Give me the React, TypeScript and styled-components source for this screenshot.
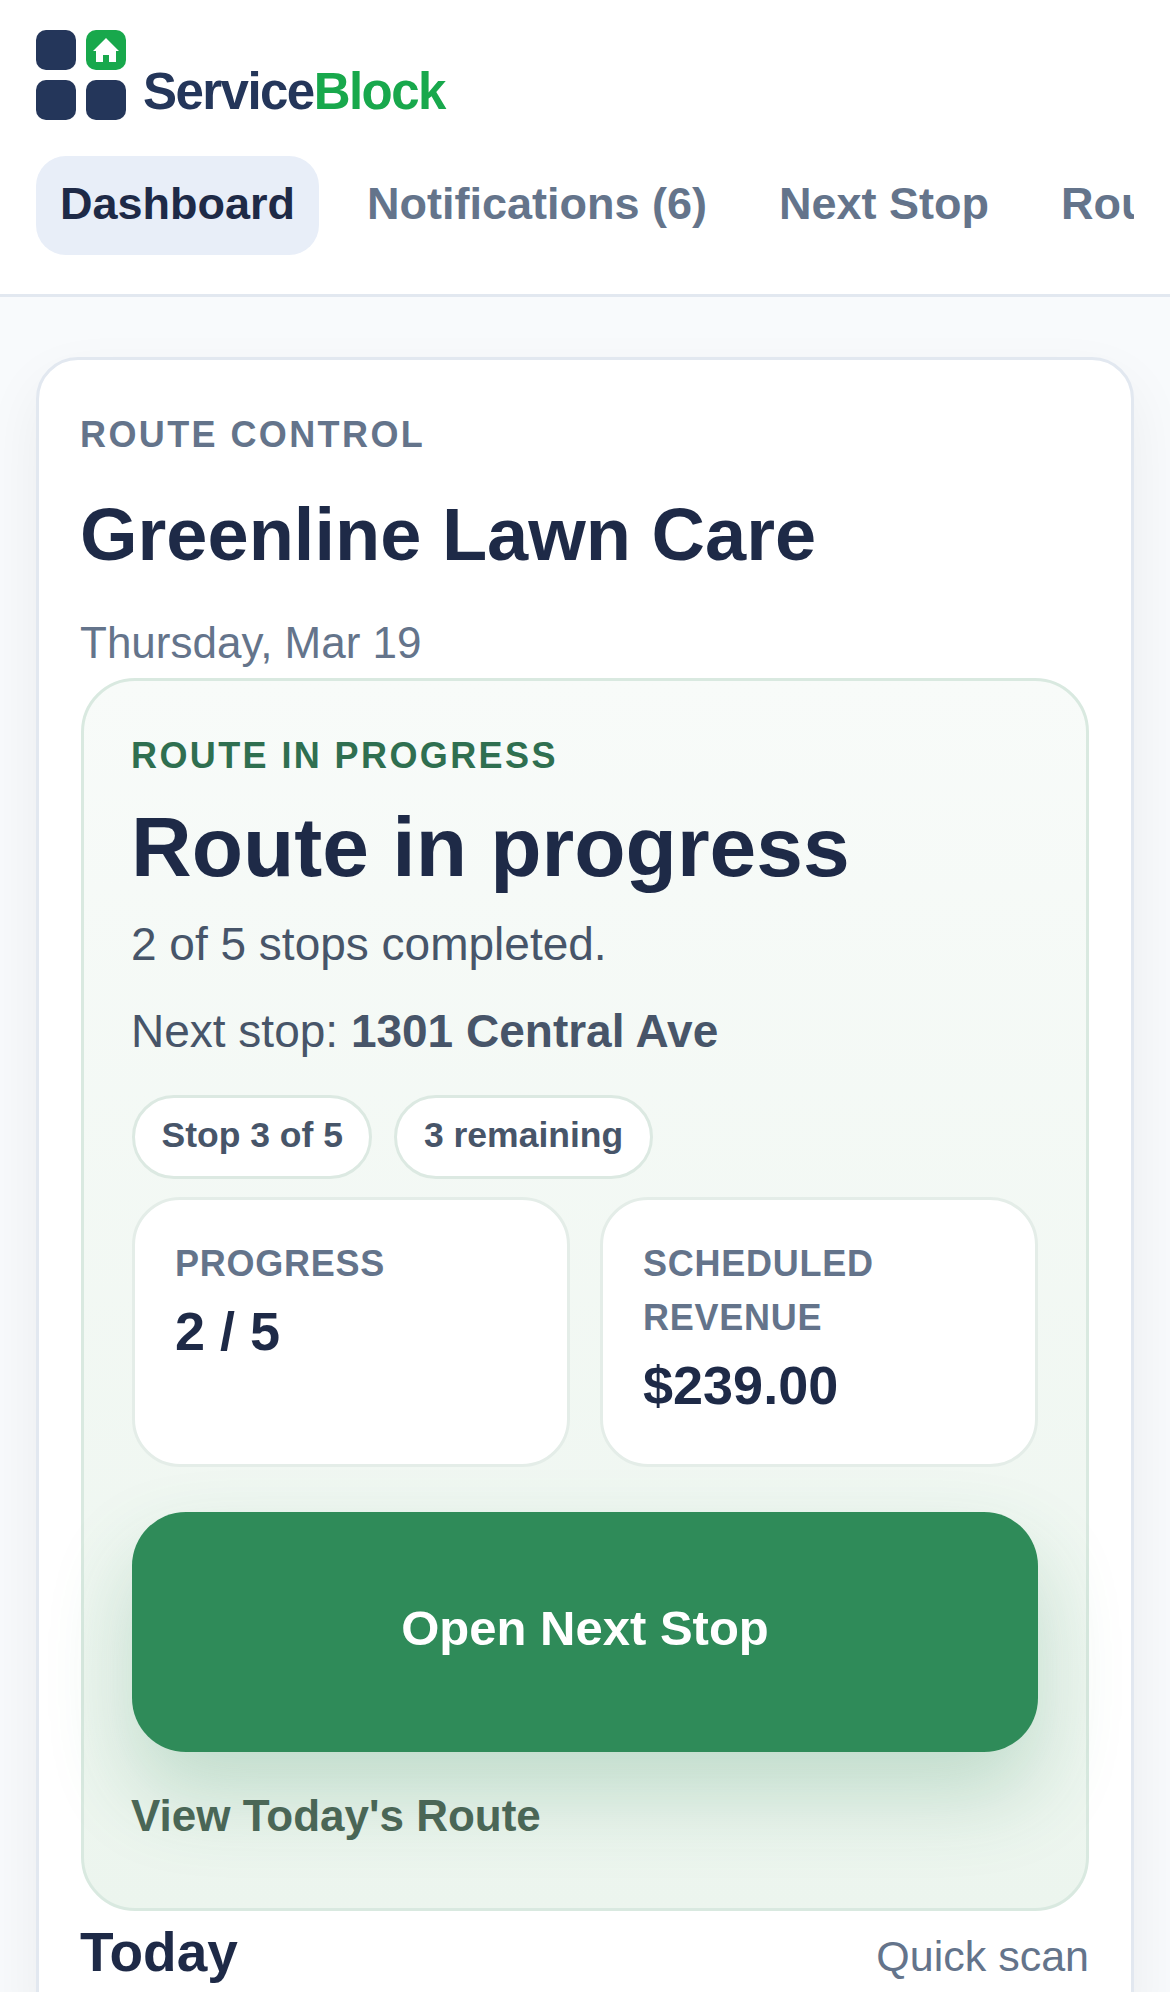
import React from "react";
import styled, { createGlobalStyle, css } from "styled-components";

const GlobalStyle = createGlobalStyle`
  html, body {
    margin: 0;
    padding: 0;
  }
  body {
    font-family: "Liberation Sans", Arial, sans-serif;
    background: #f8fafc;
    color: #1e2a47;
  }
  * {
    box-sizing: border-box;
  }
`;

// the reference text sits a hair left of its box edge
const textNudge = css`
  margin-left: -1px;
`;

const Page = styled.div`
  width: 1170px;
  height: 1992px;
  overflow: hidden;
  background: #f8fafc;
`;

const Header = styled.header`
  background: #ffffff;
  border-bottom: 3px solid #e2e8f0;
  padding: 30px 36px 39px;
`;

const Brand = styled.div`
  display: flex;
  align-items: flex-end;
  gap: 17px;
  height: 90px;
`;

const BrandName = styled.div`
  font-size: 51px;
  line-height: 55px;
  font-weight: 700;
  letter-spacing: -1.55px;
  color: #24365a;
  padding-bottom: 1px;
`;

const BrandAccent = styled.span`
  color: #18a84c;
`;

const Nav = styled.nav`
  display: flex;
  gap: 24px;
  margin-top: 36px;
  overflow: hidden;
`;

const NavItem = styled.a<{ $active?: boolean }>`
  flex: none;
  height: 99px;
  padding: 0 24px 4px;
  display: flex;
  align-items: center;
  border-radius: 30px;
  font-size: 45px;
  font-weight: 700;
  color: ${(p) => (p.$active ? "#1e2a47" : "#64748b")};
  background: ${(p) => (p.$active ? "#e8eef8" : "transparent")};
`;

const Main = styled.main`
  padding: 60px 36px 0;
`;

const Card = styled.section`
  background: #ffffff;
  border: 3px solid #e2e8f0;
  border-radius: 42px;
  padding: 48px 42px 60px;
  box-shadow: 0 24px 60px rgba(15, 23, 42, 0.06);
`;

const Kicker = styled.div`
  ${textNudge}
  font-size: 36px;
  line-height: 54px;
  font-weight: 700;
  letter-spacing: 2.4px;
  color: #64748b;
`;

const Title = styled.h1`
  ${textNudge}
  margin-top: 28px;
  margin-bottom: 0;
  font-size: 74px;
  line-height: 90px;
  font-weight: 700;
  color: #1e2a47;
`;

const DateLine = styled.p`
  ${textNudge}
  margin-top: 30px;
  margin-bottom: 0;
  font-size: 44px;
  line-height: 66px;
  color: #64748b;
`;

const Hero = styled.div`
  margin-top: 2px;
  border: 3px solid #d9e9e0;
  border-radius: 54px;
  padding: 48px 48px 59px;
  background: linear-gradient(180deg, #f8fbf9 0%, #ecf5ee 100%);
`;

const HeroKicker = styled(Kicker)`
  color: #2f6f50;
`;

const HeroTitle = styled.h2`
  ${textNudge}
  margin-top: 16px;
  margin-bottom: 0;
  font-size: 84px;
  line-height: 96px;
  font-weight: 700;
  color: #1e2a47;
`;

const HeroLine = styled.p`
  ${textNudge}
  margin-top: 18px;
  margin-bottom: 0;
  font-size: 46px;
  line-height: 69px;
  color: #475569;
`;

const StopsLine = styled(HeroLine)`
  margin-top: 15px;
`;

const Chips = styled.div`
  display: flex;
  gap: 22px;
  margin-top: 29px;
`;

const Chip = styled.div`
  height: 84px;
  padding: 0 26.5px 4px;
  display: flex;
  align-items: center;
  background: #ffffff;
  border: 3px solid #dce9e2;
  border-radius: 42px;
  font-size: 35.5px;
  font-weight: 700;
  color: #475569;
`;

const Stats = styled.div`
  display: grid;
  grid-template-columns: 1fr 1fr;
  gap: 30px;
  margin-top: 18px;
`;

const Stat = styled.div`
  height: 270px;
  padding: 37px 40px;
  background: #ffffff;
  border: 3px solid #e4ede8;
  border-radius: 48px;
`;

const StatLabel = styled.div`
  font-size: 36px;
  line-height: 54px;
  font-weight: 700;
  letter-spacing: 0.75px;
  color: #64748b;
`;

const StatValue = styled.div`
  margin-top: 7px;
  font-size: 54px;
  line-height: 66px;
  font-weight: 700;
  color: #1e2a47;
`;

const PrimaryButton = styled.div`
  margin-top: 45px;
  height: 240px;
  padding-bottom: 9px;
  display: flex;
  align-items: center;
  justify-content: center;
  background: #2f8b59;
  border-radius: 54px;
  font-size: 49px;
  font-weight: 700;
  color: #ffffff;
  box-shadow: 0 42px 84px rgba(47, 139, 89, 0.24);
`;

const RouteLink = styled.div`
  ${textNudge}
  margin-top: 31px;
  font-size: 44px;
  line-height: 66px;
  font-weight: 700;
  color: #4a6656;
`;

const SectionHead = styled.div`
  display: flex;
  align-items: baseline;
  justify-content: space-between;
  margin-top: 8px;
`;

const SectionTitle = styled.h3`
  ${textNudge}
  margin-top: 0;
  margin-bottom: 0;
  font-size: 55px;
  line-height: 66px;
  font-weight: 700;
  color: #1e2a47;
`;

const SectionNote = styled.span`
  font-size: 43px;
  color: #64748b;
`;

const Logo = () => (
  <svg width="90" height="90" viewBox="0 0 90 90" style={{ flex: "none" }}>
    <rect x="0" y="0" width="40" height="40" rx="10" fill="#24365a" />
    <rect x="50" y="0" width="40" height="40" rx="10" fill="#18a84c" />
    <rect x="0" y="50" width="40" height="40" rx="10" fill="#24365a" />
    <rect x="50" y="50" width="40" height="40" rx="10" fill="#24365a" />
    <path
      d="M70 8 L83 21 L80 21 L80 32 L73 32 L73 25 L67 25 L67 32 L60 32 L60 21 L57 21 Z"
      fill="#ffffff"
    />
  </svg>
);

export default function App() {
  return (
    <Page>
      <GlobalStyle />
      <Header>
        <Brand>
          <Logo />
          <BrandName>
            Service<BrandAccent>Block</BrandAccent>
          </BrandName>
        </Brand>
        <Nav>
          <NavItem $active>Dashboard</NavItem>
          <NavItem>Notifications (6)</NavItem>
          <NavItem>Next Stop</NavItem>
          <NavItem>Route</NavItem>
        </Nav>
      </Header>
      <Main>
        <Card>
          <Kicker>ROUTE CONTROL</Kicker>
          <Title>Greenline Lawn Care</Title>
          <DateLine>Thursday, Mar 19</DateLine>
          <Hero>
            <HeroKicker>ROUTE IN PROGRESS</HeroKicker>
            <HeroTitle>Route in progress</HeroTitle>
            <StopsLine>2 of 5 stops completed.</StopsLine>
            <HeroLine>
              Next stop: <strong>1301 Central Ave</strong>
            </HeroLine>
            <Chips>
              <Chip>Stop 3 of 5</Chip>
              <Chip>3 remaining</Chip>
            </Chips>
            <Stats>
              <Stat>
                <StatLabel>PROGRESS</StatLabel>
                <StatValue>2 / 5</StatValue>
              </Stat>
              <Stat>
                <StatLabel>SCHEDULED REVENUE</StatLabel>
                <StatValue>$239.00</StatValue>
              </Stat>
            </Stats>
            <PrimaryButton>Open Next Stop</PrimaryButton>
            <RouteLink>View Today's Route</RouteLink>
          </Hero>
          <SectionHead>
            <SectionTitle>Today</SectionTitle>
            <SectionNote>Quick scan</SectionNote>
          </SectionHead>
        </Card>
      </Main>
    </Page>
  );
}
